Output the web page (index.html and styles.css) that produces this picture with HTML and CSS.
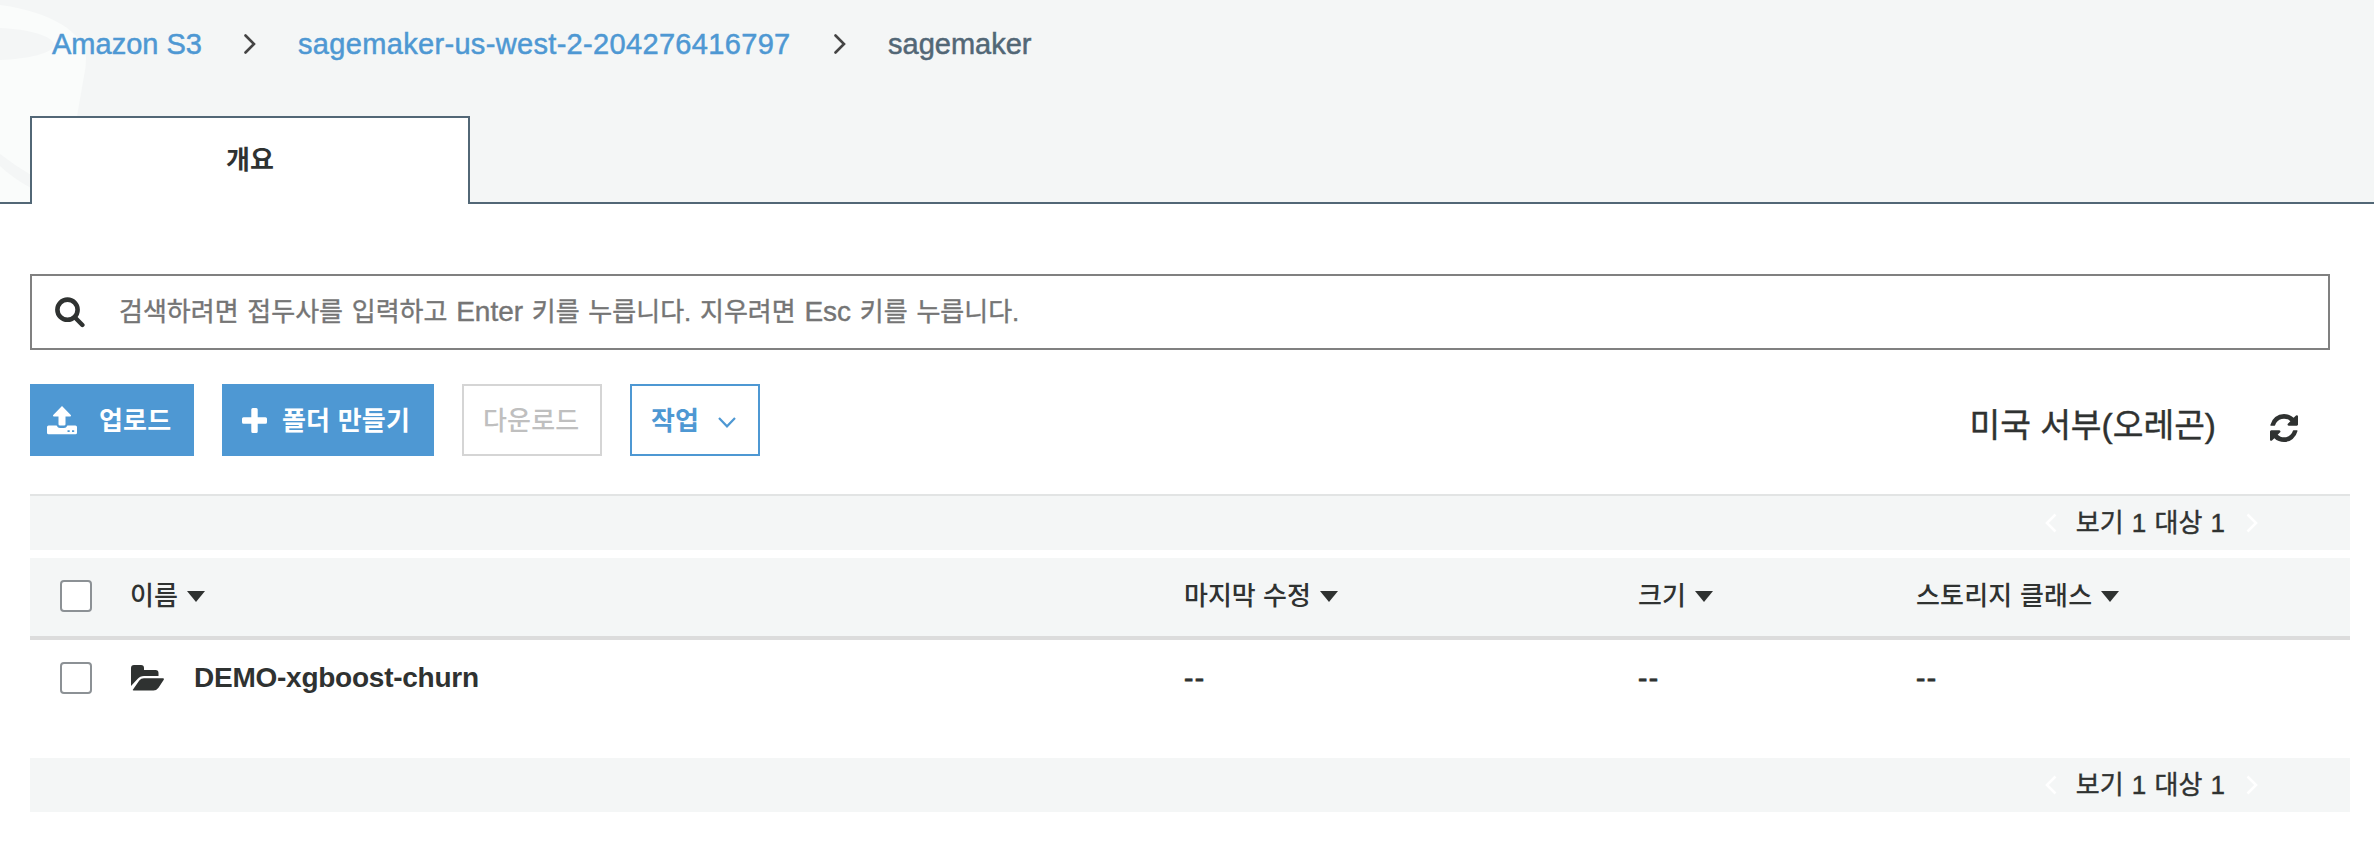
FILE: index.html
```html
<!DOCTYPE html>
<html lang="ko">
<head>
<meta charset="utf-8">
<title>Amazon S3</title>
<link rel="stylesheet" href="styles.css">
</head>
<body>
<header class="top">
  <svg class="bucket" width="90" height="202" viewBox="0 0 90 202">
    <path fill="#fafcfb" d="M0 5C48 11 86 32 86 58Q86 68 84 76L76 122V202H0Z"/>
    <path fill="#f4f6f6" d="M0 28C28 29 54 36 54 45C54 53 28 59 0 60ZM0 154Q14 165 31 175V188Q14 179 0 166Z"/>
  </svg>
  <nav class="crumbs">
    <a class="crumb crumb-root">Amazon S3</a>
    <svg class="sep" width="12" height="20" viewBox="0 0 12 20"><path d="M1.5 1.5L10 10L1.5 18.5"/></svg>
    <a class="crumb crumb-bucket">sagemaker-us-west-2-204276416797</a>
    <svg class="sep" width="12" height="20" viewBox="0 0 12 20"><path d="M1.5 1.5L10 10L1.5 18.5"/></svg>
    <span class="crumb crumb-current">sagemaker</span>
  </nav>
  <div class="tabs"><div class="tab">개요</div><div class="tab-rest"></div></div>
</header>
<main class="content">
  <div class="search">
    <svg class="search-icon" width="30" height="31" viewBox="0 0 30 31"><circle cx="12.5" cy="12.7" r="10.1" fill="none" stroke="#2f3231" stroke-width="4.6"/><path d="M20 20.5L27.4 28" stroke="#2f3231" stroke-width="4.4" stroke-linecap="round"/></svg>
    <span class="placeholder">검색하려면 접두사를 입력하고 <span class="latin">Enter</span> 키를 누릅니다. 지우려면 <span class="latin">Esc</span> 키를 누릅니다.</span>
  </div>
  <div class="toolbar">
    <div class="btn btn-upload">
      <svg width="30" height="29" viewBox="0 0 30 29"><path fill="#fff" d="M15 0L24 9.2Q24.2 10.4 23 10.4H18.5V18.2Q18.5 19.5 17 19.5H13Q11.5 19.5 11.5 18.2V10.4H7Q5.8 10.4 6 9.2ZM1.6 19.5H9.6Q10.8 22 13 22H17Q19.2 22 20.4 19.5H28.4Q30 19.5 30 21V26.7Q30 28.3 28.4 28.3H1.6Q0 28.3 0 26.7V21Q0 19.5 1.6 19.5ZM20.5 24.2V26H22.7V24.2ZM25 24.2V26H27.2V24.2Z"/></svg>
      <span class="label">업로드</span>
    </div>
    <div class="btn btn-create">
      <svg width="25" height="25" viewBox="0 0 25 25"><path fill="#fff" d="M10.8 0H14.2Q15.7 0 15.7 1.5V9.3H23.5Q25 9.3 25 10.8V14.2Q25 15.7 23.5 15.7H15.7V23.5Q15.7 25 14.2 25H10.8Q9.3 25 9.3 23.5V15.7H1.5Q0 15.7 0 14.2V10.8Q0 9.3 1.5 9.3H9.3V1.5Q9.3 0 10.8 0Z"/></svg>
      <span class="label">폴더 만들기</span>
    </div>
    <div class="btn btn-download"><span class="label">다운로드</span></div>
    <div class="btn btn-actions">
      <span class="label">작업</span>
      <svg class="chevron" width="18" height="11" viewBox="0 0 18 11"><path d="M1 1L9 9.3L17 1" fill="none" stroke="#4e98d3" stroke-width="2.2"/></svg>
    </div>
    <div class="region">미국 서부(오레곤)</div>
    <svg class="refresh" width="28" height="28" viewBox="0 0 1536 1536"><path fill="#2f3231" d="M1511 928q0 5-1 7-64 268-268 434.500T764 1536q-146 0-282.500-55T238 1324l-129 129q-19 19-45 19t-45-19-19-45V960q0-26 19-45t45-19h448q26 0 45 19t19 45-19 45l-137 137q71 66 161 102t187 36q134 0 250-65t186-179q11-17 53-117 8-23 30-23h192q13 0 22.500 9.500t9.500 22.500zm25-800v448q0 26-19 45t-45 19h-448q-26 0-45-19t-19-45 19-45l138-138Q969 256 768 256q-134 0-250 65T332 500q-11 17-53 117-8 23-30 23H50q-13 0-22.500-9.500T18 608v-7q65-268 270-434.500T768 0q146 0 284 55.500T1297 212l130-129q19-19 45-19t45 19 19 45z"/></svg>
  </div>
  <div class="pager pager-top">
    <svg class="arrow" width="12" height="20" viewBox="0 0 12 20"><path d="M10.500 1.500L2 10L10.500 18.500"/></svg>
    <span class="count">보기 1 대상 1</span>
    <svg class="arrow" width="12" height="20" viewBox="0 0 12 20"><path d="M1.500 1.500L10 10L1.500 18.500"/></svg>
  </div>
  <div class="row head">
    <span class="check"></span>
    <span class="cell">이름<i class="caret"></i></span>
    <span class="cell">마지막 수정<i class="caret"></i></span>
    <span class="cell">크기<i class="caret"></i></span>
    <span class="cell storage">스토리지 클래스<i class="caret"></i></span>
  </div>
  <div class="row item">
    <span class="check"></span>
    <span class="cell name">
      <svg width="33" height="26" viewBox="0 0 33 26"><path fill="#2f3231" d="M0 21V3Q0 0 3 0H10Q13 0 13 3V5H24.500Q27.500 5 27.500 8V11H13Q9 11 6.500 14ZM2 24.500L8.300 15.500Q10 13.300 13 13.300H32Q33.500 13.300 32.600 15L27.500 22.700Q25.500 25.500 22.500 25.500H2.600Q1.300 25.500 2 24.500Z"/></svg>
      <span>DEMO-xgboost-churn</span>
    </span>
    <span class="cell dash">--</span>
    <span class="cell dash">--</span>
    <span class="cell dash">--</span>
  </div>
  <div class="pager pager-bottom">
    <svg class="arrow" width="12" height="20" viewBox="0 0 12 20"><path d="M10.500 1.500L2 10L10.500 18.500"/></svg>
    <span class="count">보기 1 대상 1</span>
    <svg class="arrow" width="12" height="20" viewBox="0 0 12 20"><path d="M1.500 1.500L10 10L1.500 18.500"/></svg>
  </div>
</main>
</body>
</html>
```

FILE: styles.css
```css
* { box-sizing: border-box; }
body {
  margin: 0;
  width: 2374px;
  height: 848px;
  overflow: hidden;
  background: #fff;
  color: #2f3231;
  font-family: "Liberation Sans", "Noto Sans CJK KR", sans-serif;
  font-size: 26px;
  line-height: 40px;
  white-space: nowrap;
}
svg { display: block; flex: none; }

.top {
  position: relative;
  display: flex;
  flex-direction: column;
  height: 204px;
  background: #f4f6f6;
}
.bucket { position: absolute; left: 0; top: 0; }
.crumbs {
  position: relative;
  display: flex;
  align-items: center;
  height: 116px;
  padding: 0 0 29px 52px;
  font-size: 29px;
}
.crumb { color: #4e98d3; -webkit-text-stroke: .5px; }
.crumb-root { width: 192px; }
.crumb-bucket { width: 536px; margin-left: 42px; letter-spacing: .33px; }
.crumb-current { margin-left: 42px; color: #526776; }
.sep path { fill: none; stroke: #444; stroke-width: 2.6; stroke-linecap: round; }
.tabs { position: relative; display: flex; height: 88px; }
.tabs::before, .tab-rest { content: ""; border-bottom: 2px solid #526776; }
.tabs::before { width: 30px; }
.tab-rest { flex: 1; }
.tab {
  width: 440px;
  border: 2px solid #526776;
  border-bottom: 0;
  background: #fff;
  font-weight: 700;
  line-height: 84px;
  text-align: center;
}

.content { padding: 70px 24px 0 30px; }
.search {
  display: flex;
  align-items: center;
  width: 2300px;
  height: 76px;
  padding-left: 23px;
  border: 2px solid #808080;
}
.placeholder { margin-left: 34px; color: #757575; word-spacing: 1.5px; -webkit-text-stroke: .4px; }
.latin { font-size: 28px; }

.toolbar { display: flex; align-items: flex-start; height: 144px; padding-top: 34px; }
.btn {
  display: flex;
  align-items: center;
  height: 72px;
  margin-right: 28px;
  border: 2px solid #4e98d3;
  color: #4e98d3;
  font-weight: 700;
}
.label { padding-top: 2px; letter-spacing: .2px; }
.chevron { margin-top: 4px; }
.btn-upload { width: 164px; padding-left: 15px; gap: 22px; }
.btn-create { width: 212px; padding-left: 18px; gap: 15px; }
.btn-upload, .btn-create { background: #4e98d3; color: #fff; }
.btn-download { width: 140px; padding-left: 19px; border-color: #d5d5d5; color: #bfbfbf; font-weight: 500; }
.btn-actions { width: 130px; padding-left: 19px; gap: 19px; }
.region { margin: 22px 0 0 auto; font-size: 33.4px; -webkit-text-stroke: .4px; }
.refresh { margin: 30px 52px 0 54px; }

.pager { display: flex; align-items: center; justify-content: flex-end; padding-right: 92px; background: #f4f6f6; }
.pager-top { height: 56px; margin-bottom: 8px; border-top: 2px solid #e2e4e4; }
.pager-bottom { height: 54px; }
.arrow path { fill: none; stroke: #fff; stroke-width: 2.6; }
.count { margin: 0 21px 0 19px; word-spacing: 1px; -webkit-text-stroke: .4px; }

.row { display: grid; grid-template-columns: 100px 1054px 454px 278px 1fr; align-items: center; }
.head { height: 82px; padding-bottom: 2px; border-bottom: 4px solid #dcdcdc; background: #f4f6f6; font-weight: 500; }
.item { height: 118px; padding-bottom: 42px; font-size: 28px; font-weight: 700; }
.check {
  width: 32px;
  height: 32px;
  margin-left: 30px;
  border: 2px solid #8c9195;
  border-radius: 4px;
  background: #fff;
}
.cell { display: flex; align-items: center; }
.storage { letter-spacing: .2px; }
.caret {
  margin: 1px 0 0 9px;
  border: 9px solid transparent;
  border-top: 11px solid #2f3231;
  border-bottom: 0;
}
.name { padding-left: 1px; gap: 30px; letter-spacing: -.25px; }
.dash { font-weight: 400; letter-spacing: 1.5px; -webkit-text-stroke: .8px; }
```
